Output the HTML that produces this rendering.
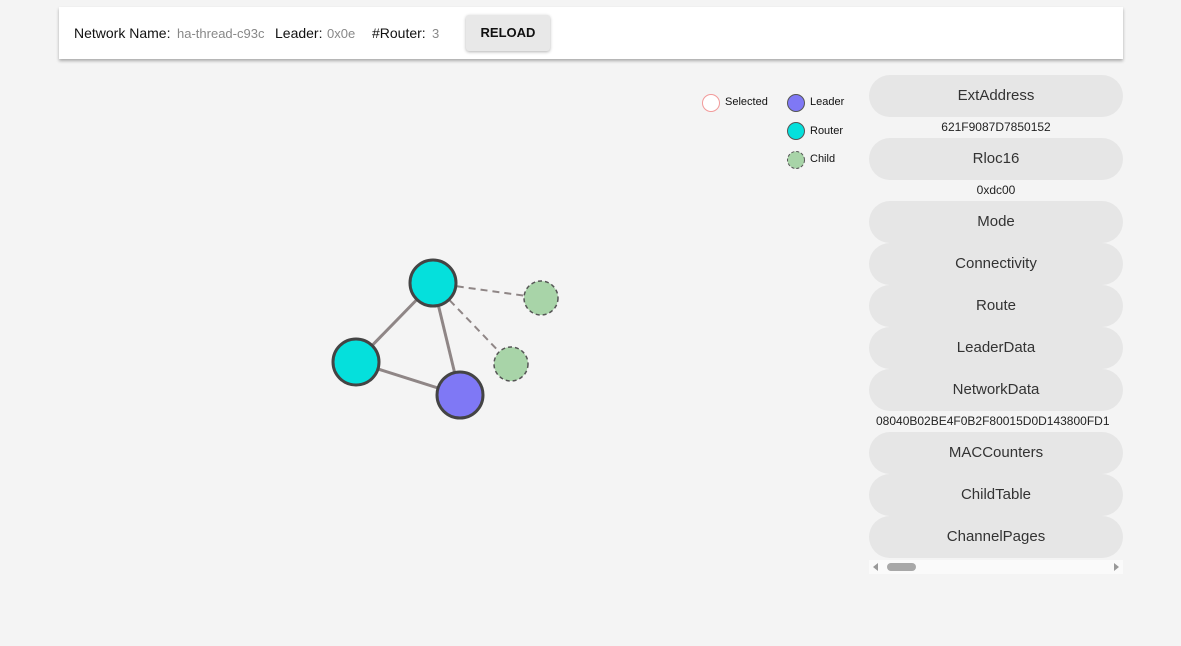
<!DOCTYPE html>
<html><head><style>
body{margin:0;width:1181px;height:646px;background:#f4f4f4;font-family:"Liberation Sans",sans-serif;position:relative;overflow:hidden}
.bar{position:absolute;left:59px;top:7px;width:1064px;height:52px;background:#fff;box-shadow:0 2px 3px rgba(0,0,0,.3)}
.bar span{position:absolute;top:18px;font-size:14px;color:#111}
.bar .v{color:#888;font-size:13px;top:19px}
.rel{position:absolute;left:407px;top:8px;width:84px;height:36px;background:#e8e8e8;border-radius:3px;box-shadow:0 1px 3px rgba(0,0,0,.3);font-size:13px;font-weight:bold;text-align:center;line-height:36px;color:#111}
.b{position:absolute;left:869px;width:254px;height:42px;border-radius:21px;background:#e6e6e6;text-align:center;line-height:42px;font-size:15px;color:#333}
.t{position:absolute;left:869px;width:254px;height:21px;text-align:center;line-height:21px;font-size:12px;color:#222;white-space:nowrap;overflow:hidden}
.lg{position:absolute;font-size:11px;color:#111}
</style></head><body>
<div class="bar">
<span style="left:15px">Network Name:</span><span class="v" style="left:118px">ha-thread-c93c</span>
<span style="left:216px">Leader:</span><span class="v" style="left:268px">0x0e</span>
<span style="left:313px">#Router:</span><span class="v" style="left:373px">3</span>
<div class="rel">RELOAD</div>
</div>
<svg style="position:absolute;left:0;top:0" width="1181" height="646">
<line x1="433" y1="283" x2="356" y2="362" stroke="#8f8686" stroke-width="3"/>
<line x1="433" y1="283" x2="460" y2="395" stroke="#8f8686" stroke-width="3"/>
<line x1="356" y1="362" x2="460" y2="395" stroke="#8f8686" stroke-width="3"/>
<line x1="433" y1="283" x2="541" y2="298" stroke="#8f8686" stroke-width="2" stroke-dasharray="7,5"/>
<line x1="433" y1="283" x2="511" y2="364" stroke="#8f8686" stroke-width="2" stroke-dasharray="7,5"/>
<circle cx="541" cy="298" r="17" fill="#a8d4a8" stroke="#555" stroke-width="1.5" stroke-dasharray="4,3"/>
<circle cx="511" cy="364" r="17" fill="#a8d4a8" stroke="#555" stroke-width="1.5" stroke-dasharray="4,3"/>
<circle cx="433" cy="283" r="23" fill="#05e0dc" stroke="#444" stroke-width="3"/>
<circle cx="356" cy="362" r="23" fill="#05e0dc" stroke="#444" stroke-width="3"/>
<circle cx="460" cy="395" r="23" fill="#7f78f5" stroke="#444" stroke-width="3"/>
<circle cx="711" cy="103" r="8.5" fill="#fff" stroke="#f29a9a" stroke-width="1"/>
<circle cx="796" cy="103" r="8.5" fill="#7f78f5" stroke="#555" stroke-width="1"/>
<circle cx="796" cy="131" r="8.5" fill="#05e0dc" stroke="#555" stroke-width="1"/>
<circle cx="796" cy="160" r="8.5" fill="#a8d4a8" stroke="#555" stroke-width="1" stroke-dasharray="3,2"/>
</svg>
<div class="lg" style="left:725px;top:96px">Selected</div>
<div class="lg" style="left:810px;top:96px">Leader</div>
<div class="lg" style="left:810px;top:125px">Router</div>
<div class="lg" style="left:810px;top:153px">Child</div>
<div class="b" style="top:75px">ExtAddress</div>
<div class="t" style="top:117px">621F9087D7850152</div>
<div class="b" style="top:138px">Rloc16</div>
<div class="t" style="top:180px">0xdc00</div>
<div class="b" style="top:201px">Mode</div>
<div class="b" style="top:243px">Connectivity</div>
<div class="b" style="top:285px">Route</div>
<div class="b" style="top:327px">LeaderData</div>
<div class="b" style="top:369px">NetworkData</div>
<div class="t" style="top:411px;text-align:left;padding-left:7px;width:247px">08040B02BE4F0B2F80015D0D143800FD1</div>
<div class="b" style="top:432px">MACCounters</div>
<div class="b" style="top:474px">ChildTable</div>
<div class="b" style="top:516px">ChannelPages</div>
<div style="position:absolute;left:869px;top:560px;width:254px;height:14px;background:#fafafa">
<div style="position:absolute;left:4px;top:3px;width:0;height:0;border-top:4px solid transparent;border-bottom:4px solid transparent;border-right:5px solid #999"></div>
<div style="position:absolute;left:18px;top:3px;width:29px;height:8px;border-radius:4px;background:#a8a8a8"></div>
<div style="position:absolute;right:4px;top:3px;width:0;height:0;border-top:4px solid transparent;border-bottom:4px solid transparent;border-left:5px solid #999"></div>
</div>
</body></html>
